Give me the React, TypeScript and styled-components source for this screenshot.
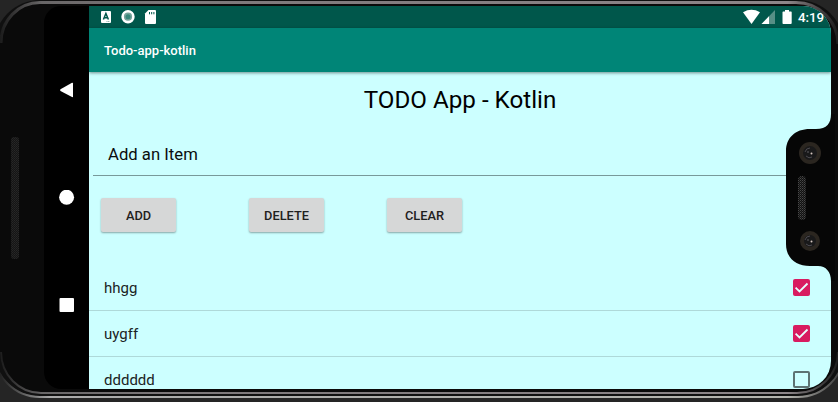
import React from "react";
import styled, { createGlobalStyle, css } from "styled-components";

const GlobalStyle = createGlobalStyle`
  * { box-sizing: border-box; }
  body { margin: 0; background: #232323; overflow: hidden; }
`;

const Phone = styled.div`
  position: relative;
  display: flex;
  width: 838px;
  height: 402px;
  padding: 6px 7px 13px 44px;
  overflow: hidden;
  font-family: Roboto, sans-serif;
`;

const Art = styled.svg`
  position: absolute;
  inset: 0;
  pointer-events: none;
`;

const Display = styled.div`
  position: relative;
  display: flex;
  width: 787px;
  height: 383px;
  overflow: hidden;
  background: #000;
  border-radius: 17px 28px 28px 17px;
`;

const NavBar = styled.nav`
  display: flex;
  flex-direction: column;
  align-items: center;
  gap: 92px;
  width: 45px;
  padding-top: 76px;
  flex-shrink: 0;
`;

const NavButton = styled.button`
  display: flex;
  width: 16px;
  height: 16px;
  padding: 0;
  border: 0;
  background: none;
`;

const Screen = styled.main`
  display: flex;
  flex-direction: column;
  flex: 1;
  min-width: 0;
  background: #ccffff;
`;

const StatusBar = styled.header`
  display: flex;
  align-items: center;
  justify-content: space-between;
  height: 22px;
  flex-shrink: 0;
  padding: 0 7px 0 11px;
  background: #00574b;
`;

const StatusGroup = styled.div`
  display: flex;
  align-items: center;
`;

const Clock = styled.span`
  width: 26px;
  margin-left: 6px;
  color: #fff;
  font-size: 13.3px;
  font-weight: 500;
  line-height: 23px;
  white-space: nowrap;
`;

const AppBar = styled.div`
  display: flex;
  align-items: center;
  height: 44px;
  flex-shrink: 0;
  padding: 1px 15px 0;
  background: #008577;
  color: #fff;
  font-size: 13px;
  font-weight: 500;
  box-shadow: 0 1px 3px rgba(0, 0, 0, 0.45);
`;

const Title = styled.h1`
  margin: 13px 0 0;
  flex-shrink: 0;
  color: #000;
  font-size: 24.2px;
  font-weight: 400;
  line-height: 30px;
  text-align: center;
`;

const ItemField = styled.div`
  height: 61px;
  flex-shrink: 0;
  margin: 0 4px;
  padding: 28px 15px 0;
  border-bottom: 1px solid #78999a;
  color: #0a0d0d;
  font-size: 16.7px;
  line-height: 24px;
`;

const Actions = styled.div`
  display: flex;
  padding: 22px 12px 0;
  height: 89px;
  flex-shrink: 0;
`;

const ActionButton = styled.button<{ $gap?: number }>`
  width: 75px;
  height: 34px;
  margin: 0 ${(p) => p.$gap ?? 0}px 0 0;
  padding: 1px 0 0;
  border: 0;
  border-radius: 2px;
  background: #d6d7d7;
  color: #1f2020;
  font: 500 12.8px Roboto, sans-serif;
  box-shadow: 0 1px 2px rgba(0, 0, 0, 0.35);
`;

const List = styled.ul`
  margin: 0;
  padding: 0;
  list-style: none;
`;

const ListRow = styled.li`
  display: flex;
  align-items: center;
  justify-content: space-between;
  height: 46px;
  padding: 0 21px 0 15px;
  border-bottom: 1px solid #aed9d9;
  color: #1b2424;
  font-size: 15px;
`;

const ItemText = styled.span`
  padding-top: 1px;
`;

const Check = styled.span<{ $on: boolean }>`
  display: flex;
  width: 17px;
  height: 17px;
  border-radius: 2px;
  ${(p) =>
    p.$on
      ? css`background: #d81b60;`
      : css`border: 2px solid #5c7373;`}
`;

const items = [
  { text: "hhgg", done: true },
  { text: "uygff", done: true },
  { text: "dddddd", done: false },
];

const BodyArt = () => (
  <Art width="838" height="402" viewBox="0 0 838 402">
    <defs>
      <linearGradient id="topRim" gradientUnits="userSpaceOnUse" x1="0" x2="838" y1="0" y2="0">
        <stop offset="0" stopColor="#1c1c1c" />
        <stop offset="0.05" stopColor="#686667" />
        <stop offset="0.2" stopColor="#7d787a" />
        <stop offset="0.94" stopColor="#8d8689" />
        <stop offset="1" stopColor="#1c1c1c" />
      </linearGradient>
      <linearGradient id="bottomRim" gradientUnits="userSpaceOnUse" x1="0" x2="838" y1="0" y2="0">
        <stop offset="0" stopColor="#222" />
        <stop offset="0.06" stopColor="#aaa" />
        <stop offset="0.94" stopColor="#b4b4ae" />
        <stop offset="1" stopColor="#444" />
      </linearGradient>
      <pattern id="mesh" width="2" height="2" patternUnits="userSpaceOnUse">
        <rect width="2" height="2" fill="#151515" />
        <rect width="1" height="1" fill="#272727" />
        <rect x="1" y="1" width="1" height="1" fill="#222" />
      </pattern>
      <pattern id="grille" width="2" height="2" patternUnits="userSpaceOnUse">
        <rect width="2" height="2" fill="#101010" />
        <rect width="1" height="1" fill="#484848" />
        <rect x="1" y="1" width="1" height="1" fill="#2e2e2e" />
      </pattern>
    </defs>
    <rect width="838" height="402" fill="#252525" />
    <rect x="-6" y="0" width="850" height="396" rx="46" fill="#101010" />
    <path d="M-6 351A46 46 0 0 0 40 397H798A46 46 0 0 0 844 351" fill="none" stroke="url(#bottomRim)" strokeWidth="2" />
    <rect x="0" y="3" width="838" height="389" rx="40" fill="#0a0a0a" />
    <path d="M1 43A39 40 0 0 1 40 2.500H796A42 42 0 0 1 838 44" fill="none" stroke="url(#topRim)" strokeWidth="3" />
    <path d="M1 352A40 41 0 0 0 41 393H797A41 41 0 0 0 838 352" fill="none" stroke="url(#topRim)" strokeWidth="2" />
    <rect x="11" y="137" width="8" height="122" rx="3" fill="url(#mesh)" />
  </Art>
);

const Lens = ({ y, r }: { y: number; r: number }) => (
  <g>
    <circle cx="810" cy={y} r={r} fill="#2b2620" />
    <circle cx="810" cy={y} r={r - 4} fill="#19191a" />
    <path d={`M805 ${y - 1}q1-4 5-4M806 ${y + 3}q3 3 6 1`} fill="none" stroke="#4c4a50" />
    <circle cx="811.500" cy={y + 0.5} r="1" fill="#d8c8c2" />
    <circle cx="808" cy={y - 1} r="0.700" fill="#77747c" />
  </g>
);

const NotchArt = () => (
  <Art width="838" height="402" viewBox="0 0 838 402">
    <path d="M835 114H831C831 123 827 129 816 129H810C795 129 786 138 786 151V244C786 258 796 266 810 266H818C826 266 831 272 831 281H835Z" fill="#060606" />
    <rect x="798" y="176" width="8" height="44" rx="4" fill="url(#grille)" />
    <Lens y={153} r={11} />
    <Lens y={241} r={10} />
  </Art>
);

export default function App() {
  return (
    <>
      <GlobalStyle />
      <Phone>
        <BodyArt />
        <Display>
          <NavBar>
            <NavButton aria-label="Back">
              <svg width="16" height="16"><path d="M1.500 7.200L13 .8Q14 .4 14 1.500V14.500Q14 15.600 13 15.100L1.500 8.900Q.6 8 1.500 7.200Z" fill="#fff" /></svg>
            </NavButton>
            <NavButton aria-label="Home">
              <svg width="16" height="16"><circle cx="7.600" cy="7.200" r="7.500" fill="#fff" /></svg>
            </NavButton>
            <NavButton aria-label="Overview">
              <svg width="16" height="16"><rect x=".5" y="0" width="14.500" height="14" rx="1" fill="#fff" /></svg>
            </NavButton>
          </NavBar>
          <Screen>
            <StatusBar>
              <StatusGroup>
                <svg width="60" height="22" viewBox="100 6 60 22">
                  <rect x="101" y="11" width="10" height="12" rx="1" fill="#fff" />
                  <path d="M103.400 19.500L105.900 13.500L108.400 19.500M104.300 17.700H107.500" fill="none" stroke="#00574b" strokeWidth="1.500" />
                  <path d="M106.500 21.500H110" stroke="#88aca6" strokeDasharray="1 .6" />
                  <circle cx="128" cy="16.700" r="5.400" fill="#75a39b" stroke="#fff" strokeWidth="2.600" />
                  <circle cx="128" cy="16.700" r="2.500" fill="#38877a" />
                  <path d="M148.500 10H155Q156 10 156 11V23Q156 24 155 24H146Q145 24 145 23V13.500Z" fill="#fff" />
                  <path d="M149.500 12V14.300M151.700 12V14.300M153.900 12V14.300" stroke="#00574b" />
                </svg>
              </StatusGroup>
              <StatusGroup>
                <svg width="50" height="22" viewBox="742 6 50 22">
                  <path d="M743 12.300Q751.500 7.400 760 12.300L751.500 24Z" fill="#fff" />
                  <path d="M775 10V24H761.500Z" fill="#578f86" />
                  <path d="M769 16.200V24H761.500Z" fill="#fff" />
                  <path d="M785 10H789V11.500H791Q791.700 11.500 791.700 12.300V23Q791.700 24 790.800 24H783.200Q782.500 24 782.500 23V12.300Q782.500 11.500 783.200 11.500H785Z" fill="#fff" />
                </svg>
                <Clock>4:19</Clock>
              </StatusGroup>
            </StatusBar>
            <AppBar>Todo-app-kotlin</AppBar>
            <Title>TODO App - Kotlin</Title>
            <ItemField>Add an Item</ItemField>
            <Actions>
              <ActionButton $gap={73}>ADD</ActionButton>
              <ActionButton $gap={63}>DELETE</ActionButton>
              <ActionButton>CLEAR</ActionButton>
            </Actions>
            <List>
              {items.map((item) => (
                <ListRow key={item.text}>
                  <ItemText>{item.text}</ItemText>
                  <Check $on={item.done} role="checkbox" aria-checked={item.done}>
                    {item.done && (
                      <svg width="17" height="17"><path d="M2.600 8.600L6.500 12.500L14.500 4.500" fill="none" stroke="#e6ffff" strokeWidth="1.800" /></svg>
                    )}
                  </Check>
                </ListRow>
              ))}
            </List>
          </Screen>
        </Display>
        <NotchArt />
      </Phone>
    </>
  );
}
